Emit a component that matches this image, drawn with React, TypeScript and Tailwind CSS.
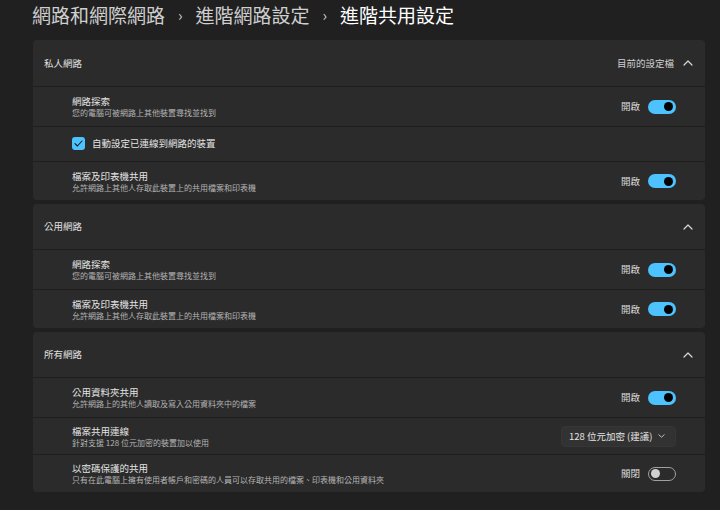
import type { ReactNode } from "react";

function ChevronUp() {
  return (
    <svg width="10" height="6" viewBox="0 0 10 6" className="block">
      <polyline
        points="1,5 5,1 9,5"
        fill="none"
        stroke="#d6d6d6"
        strokeWidth="1.2"
        strokeLinecap="round"
        strokeLinejoin="round"
      />
    </svg>
  );
}

function ChevronDown() {
  return (
    <svg width="7" height="4" viewBox="0 0 7 4" className="block">
      <polyline
        points="0.8,0.8 3.5,3.2 6.2,0.8"
        fill="none"
        stroke="#bdbdbd"
        strokeWidth="1"
        strokeLinecap="round"
        strokeLinejoin="round"
      />
    </svg>
  );
}

function Toggle({ on }: { on: boolean }) {
  if (on) {
    return (
      <div className="flex items-center justify-end w-[28px] h-[14px] rounded-full bg-[#4cc2ff] pr-[3px]">
        <div className="w-[9px] h-[9px] rounded-full bg-[#000000]" />
      </div>
    );
  }
  return (
    <div className="flex items-center w-[28px] h-[14px] rounded-full border border-[#a0a0a0] pl-[2px]">
      <div className="w-[9px] h-[9px] rounded-full bg-[#d0d0d0]" />
    </div>
  );
}

function ToggleControl({ on }: { on: boolean }) {
  return (
    <div className="flex items-center gap-[8px]">
      <span className="text-[9.5px] text-[#dcdcdc]">{on ? "開啟" : "關閉"}</span>
      <Toggle on={on} />
    </div>
  );
}

function Row({
  title,
  desc,
  h = "h-[40px]",
  children,
}: {
  title: string;
  desc: string;
  h?: string;
  children: ReactNode;
}) {
  return (
    <div
      className={`flex items-center justify-between border-t border-[#1e1e1e] pl-[39px] pr-[29px] ${h}`}
    >
      <div className="flex flex-col">
        <span className="text-[9.5px] leading-[12px] text-[#e4e4e4]">{title}</span>
        <span className="text-[8px] leading-[11px] text-[#b4b4b4]">{desc}</span>
      </div>
      {children}
    </div>
  );
}

function Panel({
  title,
  right,
  h = "h-[45px]",
  children,
}: {
  title: string;
  right?: string;
  h?: string;
  children: ReactNode;
}) {
  return (
    <div className="rounded-[4px] bg-[#2b2b2b] overflow-hidden">
      <div className={`flex items-center justify-between pl-[11px] pr-[12px] ${h}`}>
        <span className="text-[9.5px] text-[#e0e0e0]">{title}</span>
        <div className="flex items-center gap-[9px]">
          {right && <span className="text-[9.5px] text-[#d0d0d0]">{right}</span>}
          <ChevronUp />
        </div>
      </div>
      {children}
    </div>
  );
}

export default function App() {
  return (
    <div className="w-[720px] h-[510px] overflow-hidden bg-[#202020] font-['Noto_Sans_CJK_TC','Noto_Sans',sans-serif]">
      {/* Breadcrumb */}
      <div className="flex items-center h-[28px] pl-[32px] text-[19px] leading-none">
        <span className="text-[#cfcfcf]">網路和網際網路</span>
        <span className="mx-[13px] text-[15px] text-[#cfcfcf]">›</span>
        <span className="text-[#cfcfcf]">進階網路設定</span>
        <span className="mx-[13px] text-[15px] text-[#cfcfcf]">›</span>
        <span className="text-[#ffffff]">進階共用設定</span>
      </div>

      <div className="flex flex-col gap-[4px] mt-[12px] ml-[33px] w-[672px]">
        <Panel title="私人網路" right="目前的設定檔" h="h-[46px]">
          <Row title="網路探索" desc="您的電腦可被網路上其他裝置尋找並找到">
            <ToggleControl on />
          </Row>
          <div className="flex items-center gap-[7px] h-[35px] border-t border-[#1e1e1e] pl-[39px] pb-[1px]">
            <div className="flex items-center justify-center w-[13px] h-[13px] rounded-[3px] bg-[#4cc2ff]">
              <svg width="9" height="7" viewBox="0 0 9 7">
                <polyline
                  points="1,3.6 3.4,6 8,1"
                  fill="none"
                  stroke="#1a1a1a"
                  strokeWidth="1.1"
                  strokeLinecap="round"
                  strokeLinejoin="round"
                />
              </svg>
            </div>
            <span className="text-[9.5px] text-[#e4e4e4]">自動設定已連線到網路的裝置</span>
          </div>
          <Row title="檔案及印表機共用" desc="允許網路上其他人存取此裝置上的共用檔案和印表機" h="h-[39px]">
            <ToggleControl on />
          </Row>
        </Panel>

        <Panel title="公用網路">
          <Row title="網路探索" desc="您的電腦可被網路上其他裝置尋找並找到">
            <ToggleControl on />
          </Row>
          <Row title="檔案及印表機共用" desc="允許網路上其他人存取此裝置上的共用檔案和印表機" h="h-[39px]">
            <ToggleControl on />
          </Row>
        </Panel>

        <Panel title="所有網路">
          <Row title="公用資料夾共用" desc="允許網路上的其他人讀取及寫入公用資料夾中的檔案">
            <ToggleControl on />
          </Row>
          <Row title="檔案共用連線" desc="針對支援 128 位元加密的裝置加以使用" h="h-[37px]">
            <div className="flex items-center justify-between w-[115px] h-[21px] rounded-[4px] bg-[#323232] border border-[#363636] pl-[7px] pr-[10px]">
              <span className="text-[9.5px] text-[#e4e4e4]">128 位元加密 (建議)</span>
              <ChevronDown />
            </div>
          </Row>
          <Row
            title="以密碼保護的共用"
            desc="只有在此電腦上擁有使用者帳戶和密碼的人員可以存取共用的檔案、印表機和公用資料夾"
            h="h-[38px]"
          >
            <ToggleControl on={false} />
          </Row>
        </Panel>
      </div>
    </div>
  );
}
